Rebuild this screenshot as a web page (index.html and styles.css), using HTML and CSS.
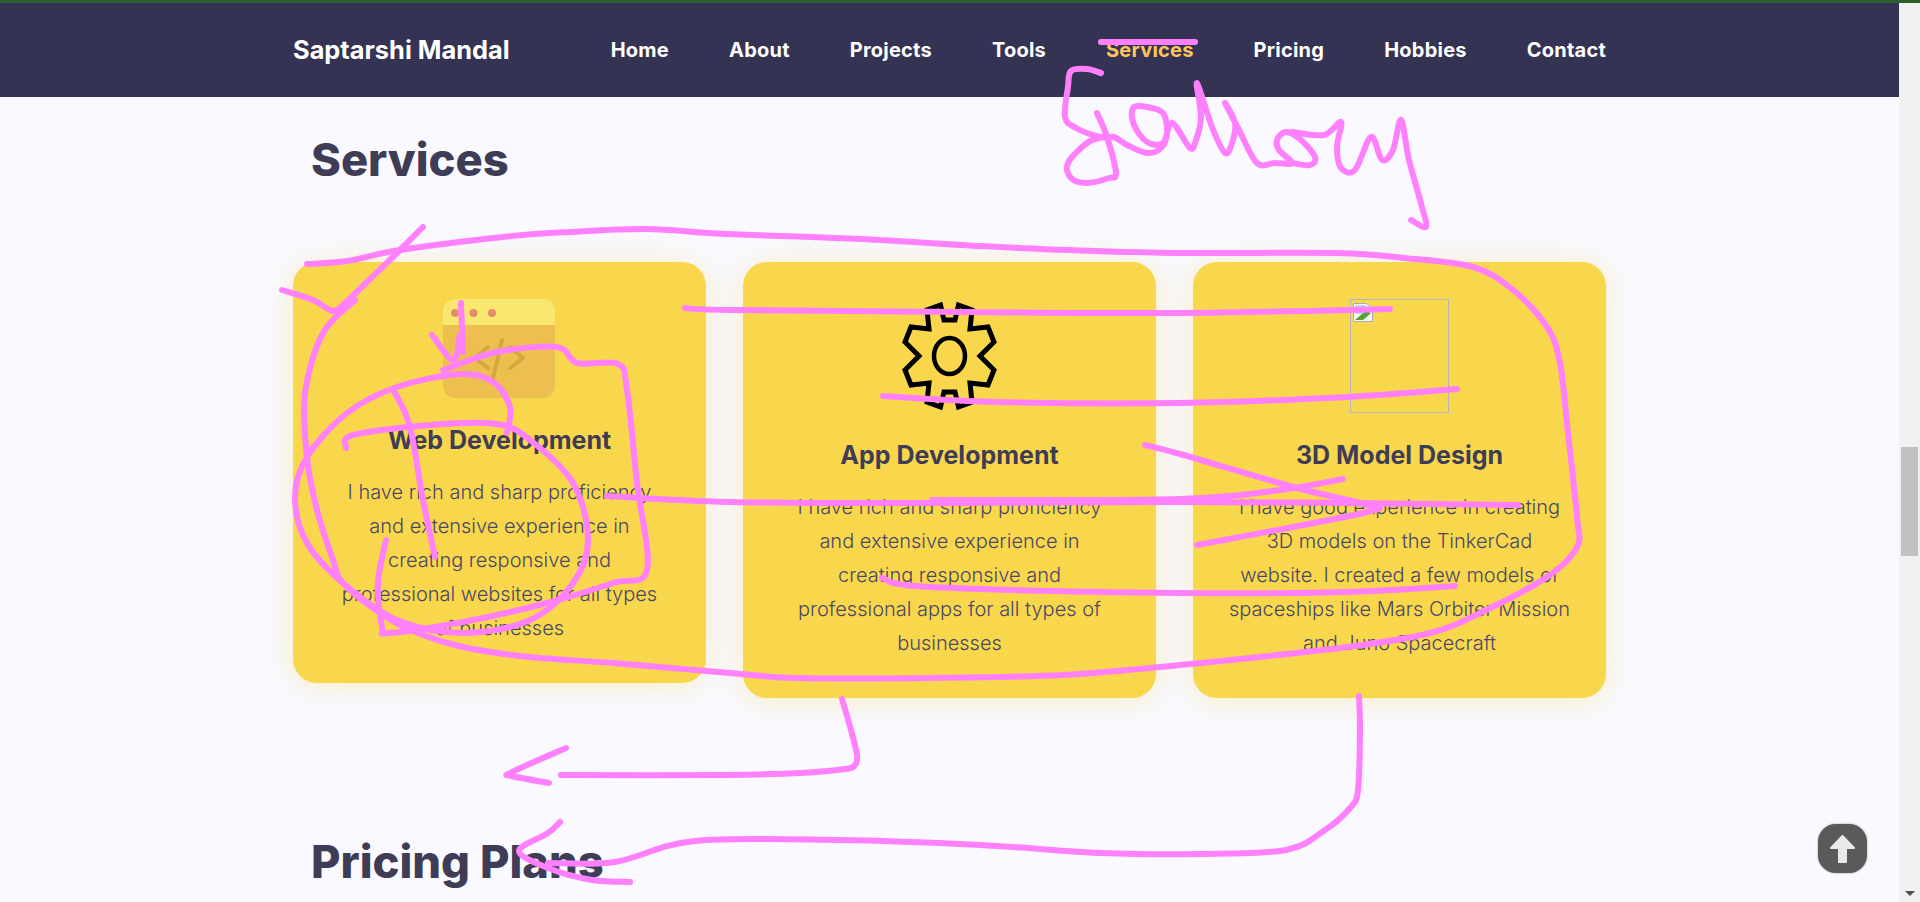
FILE: index.html
```html
<!DOCTYPE html>
<html lang="en">
<head>
<meta charset="utf-8">
<title>Saptarshi Mandal</title>
<link rel="stylesheet" href="styles.css">
</head>
<body>
<div class="strip"></div>
<div class="window">
  <div class="page">
    <header class="nav">
      <div class="nav-inner">
        <a class="brand" href="#">Saptarshi Mandal</a>
        <nav class="links">
          <a href="#">Home</a>
          <a href="#">About</a>
          <a href="#">Projects</a>
          <a href="#">Tools</a>
          <a href="#" class="active">Services</a>
          <a href="#">Pricing</a>
          <a href="#">Hobbies</a>
          <a href="#">Contact</a>
        </nav>
      </div>
    </header>
    <main class="content">
      <h2 class="section-title">Services</h2>
      <div class="cards">
        <article class="card">
          <svg class="icon-web" viewBox="0 0 112 99" aria-hidden="true">
            <path fill="#ecbf4e" d="M0 26h112v61a12 12 0 0 1-12 12H12A12 12 0 0 1 0 87z"/>
            <path fill="#f9e76f" d="M12 0h88a12 12 0 0 1 12 12v14H0V12A12 12 0 0 1 12 0z"/>
            <circle cx="12" cy="14" r="4" fill="#e38e69"/>
            <circle cx="30.500" cy="14" r="4" fill="#e38e69"/>
            <circle cx="49" cy="14" r="4" fill="#e38e69"/>
            <path fill="none" stroke="#d4a83e" stroke-width="4" stroke-linecap="round" stroke-linejoin="round" d="M45 48 32 59l13 10M59 41l-9 38M67 48l13 11-13 10"/>
          </svg>
          <h3 class="card-title">Web Development</h3>
          <p class="card-text">I have rich and sharp proficiency<br>and extensive experience in<br>creating responsive and<br>professional websites for all types<br>of businesses</p>
        </article>
        <article class="card">
          <svg class="icon-box" viewBox="0 0 99 114" aria-hidden="true">
            <polygon fill="none" stroke="#000" stroke-width="5" points="58.500,6 72,11 70,30 88,28 94,43 80,57 94,71 88,86 70,84 72,103 58.500,108 55,93 44,93 40.500,108 27,103 29,84 11,86 5,71 19,57 5,43 11,28 29,30 27,11 40.500,6 44,21 55,21"/>
            <ellipse cx="49.500" cy="57" rx="15.500" ry="18" fill="none" stroke="#000" stroke-width="4.500"/>
          </svg>
          <h3 class="card-title">App Development</h3>
          <p class="card-text">I have rich and sharp proficiency<br>and extensive experience in<br>creating responsive and<br>professional apps for all types of<br>businesses</p>
        </article>
        <article class="card">
          <div class="broken-image">
            <svg class="broken-glyph" viewBox="0 0 20 19" aria-hidden="true">
              <path fill="#f4f6fb" stroke="#a9adb3" d="M.5.5h13l6 5v13H.5z"/>
              <path fill="#c3d4f0" d="M2 2h10l3 4v5H2z"/>
              <path fill="#5aa02c" d="M2 17l7-6 4-3 5 2-8 7z"/>
            </svg>
          </div>
          <h3 class="card-title">3D Model Design</h3>
          <p class="card-text">I have good experience in creating<br>3D models on the TinkerCad<br>website. I created a few models of<br>spaceships like Mars Orbiter Mission<br>and Juno Spacecraft</p>
        </article>
      </div>
      <h2 class="section-title pricing-title">Pricing Plans</h2>
    </main>
  </div>
  <div class="scrollbar">
    <div class="thumb"></div>
    <div class="scroll-down"></div>
  </div>
</div>
<a class="to-top" href="#" aria-label="Back to top">
  <svg viewBox="0 0 49 49" aria-hidden="true">
    <path fill="#e8eaea" stroke="#e8eaea" stroke-width="2" stroke-linejoin="round" d="M24.500 12 13 24h8v14h7V24h8z"/>
  </svg>
</a>
<svg id="ink" class="ink" viewBox="0 0 1920 902" aria-hidden="true"></svg>
<script src="ink.js"></script>
</body>
</html>
```
FILE: styles.css
```css
* { box-sizing: border-box; }
html, body { margin: 0; height: 902px; overflow: hidden; }
body {
  font-family: "Inter", "Liberation Sans", sans-serif;
  background: #f9f9ff;
  color: #3f3d56;
}
a { text-decoration: none; color: inherit; }
.strip { height: 3px; background: #2f5e2e; }
.window { display: flex; height: 899px; }
.page { flex: 1; min-width: 0; overflow: hidden; }
.nav { height: 94px; background: #353353; color: #fff; }
.nav-inner {
  width: 1313px;
  height: 100%;
  margin: 0 auto;
  display: flex;
  align-items: center;
  justify-content: space-between;
  padding-bottom: 1px;
}
.brand { font-size: 25.400px; font-weight: 700; }
.links { display: flex; gap: 60px; font-size: 20px; font-weight: 700; letter-spacing: .23px; }
.links .active { color: #fcc65c; }
.content { width: 1313px; margin: 0 auto; }
.section-title {
  margin: 36px 0 75px;
  padding-left: 18px;
  font-size: 45.300px;
  line-height: 54px;
  font-weight: 800;
}
.pricing-title { margin-top: 137px; }
.cards { display: flex; gap: 37px; align-items: flex-start; }
.card {
  flex: 1;
  display: flex;
  flex-direction: column;
  align-items: center;
  padding: 37px 30px 38px;
  border-radius: 24px;
  background: #f9d74c;
  box-shadow: 0 2px 30px rgba(249, 215, 76, .34);
  text-align: center;
}
.icon-web { width: 112px; height: 99px; display: block; margin-right: 1px; }
.icon-box { width: 99px; height: 114px; display: block; }
.broken-image {
  width: 99px;
  height: 114px;
  padding: 3px 2px;
  border: 1px solid #b4b8bc;
}
.broken-glyph { width: 20px; height: 19px; display: block; }
.card-title {
  margin: 28px 0 20px;
  font-size: 25px;
  line-height: 29px;
  font-weight: 700;
}
.card-text {
  margin: 0;
  font-size: 20px;
  line-height: 34px;
  font-weight: 300;
  color: #4b4866;
}
.scrollbar { width: 21px; position: relative; background: #f1f1f1; }
.thumb {
  width: 17px;
  height: 109px;
  margin: 444px 0 0 2px;
  background: #c1c1c1;
}
.scroll-down {
  position: absolute;
  left: 6px;
  bottom: 6px;
  width: 0;
  height: 0;
  border-left: 5px solid transparent;
  border-right: 5px solid transparent;
  border-top: 5px solid #505050;
}
.to-top {
  position: fixed;
  left: 1818px;
  top: 824px;
  width: 49px;
  height: 49px;
  border-radius: 18px;
  background: #5a5a5a;
  box-shadow: 0 0 2px #8a8a8a;
}
.to-top svg { display: block; width: 49px; height: 49px; }
.ink {
  position: fixed;
  left: 0;
  top: 0;
  width: 1920px;
  height: 902px;
  pointer-events: none;
  fill: none;
  stroke: #ff80fd;
  stroke-width: 6;
  stroke-linecap: round;
  stroke-linejoin: round;
}
```
FILE: ink.js
```js
// Freehand pen annotations that lie over the page.
var strokes = [
  [[1101,42],[1195,42]],
  [[1101,73],[1087,69],[1071,71],[1068,87],[1065,117],[1076,128],[1100,137],[1114,137],[1127,145],[1147,153],[1161,148],[1167,133],[1163,113],[1147,107],[1133,108],[1134,125],[1147,142],[1163,143],[1172,123],[1190,148],[1196,140],[1201,117],[1197,83],[1212,127],[1225,153],[1232,143],[1235,123],[1225,103],[1239,130],[1257,163],[1275,163],[1292,163],[1279,150],[1277,140],[1286,132],[1301,140],[1315,157],[1310,165],[1292,163]],
  [[1292,132],[1324,135],[1341,122],[1337,147],[1341,168],[1355,170],[1371,137],[1382,160],[1393,150],[1401,120],[1409,160],[1422,207],[1426,227],[1411,220]],
  [[1097,113],[1107,137],[1116,173],[1109,178],[1087,183],[1071,178],[1068,163],[1087,143],[1103,137]],
  [[307,264],[347,261],[400,250],[503,237],[570,232],[646,229],[726,234],[860,239],[980,246],[1069,250],[1181,253],[1337,253],[1404,258],[1473,267],[1513,290],[1547,327],[1560,363],[1568,433],[1577,517],[1577,547],[1547,577],[1480,613],[1430,633],[1347,647],[1180,665],[1063,675],[930,678],[797,678],[730,673],[613,663],[530,657],[463,647],[413,631],[380,613],[343,583],[333,560],[317,510],[307,457],[305,393],[323,333],[355,300]],
  [[423,227],[398,252],[369,280],[345,303],[333,311],[313,300],[282,290]],
  [[461,303],[463,352]],
  [[432,335],[453,360],[460,335]],
  [[443,370],[497,352],[557,347],[577,363],[618,364],[627,390],[637,483],[647,570],[613,583],[547,603],[463,622],[390,633],[382,627],[378,583],[386,540]],
  [[507,433],[510,407],[493,382],[460,374],[397,387],[347,413],[307,457],[295,497],[307,543],[343,583],[397,620],[463,633],[530,620],[573,583],[588,540],[573,483],[530,440],[497,424],[430,425],[353,435],[346,448]],
  [[395,393],[410,427],[423,500],[435,557]],
  [[685,308],[730,310],[963,312],[1180,313],[1390,309]],
  [[883,396],[997,402],[1180,403],[1347,397],[1457,389]],
  [[607,496],[730,502],[930,503],[1180,502],[1347,503],[1518,505]],
  [[932,500],[1180,499],[1280,490],[1343,479]],
  [[1145,445],[1180,454],[1297,488],[1367,505],[1363,513],[1197,545]],
  [[882,578],[930,587],[1180,593],[1347,592],[1455,586]],
  [[842,699],[851,730],[857,755],[855,765],[845,769],[800,773],[726,775],[561,775]],
  [[566,748],[512,772],[512,776],[549,783]],
  [[1359,696],[1360,730],[1358,790],[1350,808],[1325,830],[1286,850],[1200,854],[1102,853],[980,845],[838,840],[695,841],[615,862],[548,863]],
  [[560,822],[548,833],[519,851],[548,868],[592,880],[630,882]]
];

function smooth(p) {
  var d = "M" + p[0][0] + " " + p[0][1];
  for (var i = 0; i < p.length - 1; i++) {
    var a = p[i - 1] || p[i], b = p[i], c = p[i + 1], e = p[i + 2] || c;
    d += "C" + (b[0] + (c[0] - a[0]) / 6) + " " + (b[1] + (c[1] - a[1]) / 6) + " " +
         (c[0] - (e[0] - b[0]) / 6) + " " + (c[1] - (e[1] - b[1]) / 6) + " " + c[0] + " " + c[1];
  }
  return d;
}

var ink = document.getElementById("ink");
strokes.forEach(function (p) {
  var path = document.createElementNS("http://www.w3.org/2000/svg", "path");
  path.setAttribute("d", smooth(p));
  ink.appendChild(path);
});
```
